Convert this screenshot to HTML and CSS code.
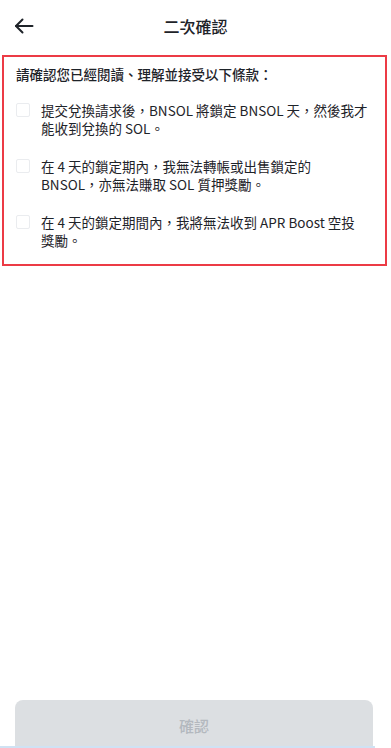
FILE: index.html
```html
<!DOCTYPE html>
<html lang="zh-Hant">
<head>
<meta charset="utf-8">
<title>二次確認</title>
<link rel="stylesheet" href="styles.css">
</head>
<body>
<div class="page">
  <header class="header">
    <span class="back">
      <svg width="20" height="16" viewBox="0 0 20 16" fill="none" stroke="#1e2329" stroke-width="2" stroke-linecap="round" stroke-linejoin="round">
        <path d="M18.5 8H2"/>
        <path d="M8.5 1.5L2 8l6.5 6.5"/>
      </svg>
    </span>
    <h1 class="title">二次確認</h1>
  </header>

  <section class="terms">
    <p class="terms-head">請確認您已經閱讀、理解並接受以下條款：</p>
    <ul class="term-list">
      <li class="term"><span class="check"></span><span class="term-text">提交兌換請求後，BNSOL 將鎖定 BNSOL 天，然後我才<br>能收到兌換的 SOL。</span></li>
      <li class="term"><span class="check"></span><span class="term-text">在 4 天的鎖定期內，我無法轉帳或出售鎖定的<br>BNSOL，亦無法賺取 SOL 質押獎勵。</span></li>
      <li class="term"><span class="check"></span><span class="term-text">在 4 天的鎖定期間內，我將無法收到 APR Boost 空投<br>獎勵。</span></li>
    </ul>
  </section>

  <div class="spacer"></div>

  <footer class="footer">
    <button class="confirm" type="button">確認</button>
  </footer>
  <div class="bottom-line"></div>
</div>
</body>
</html>
```

FILE: styles.css
```css
* { box-sizing: border-box; }
html, body { margin: 0; padding: 0; background: #ffffff; }
body {
  font-family: "Noto Sans CJK TC", "Noto Sans", sans-serif;
  color: #1e2329;
}
.page {
  height: 748px;
  display: flex;
  flex-direction: column;
  overflow: hidden;
}
.header {
  height: 52px;
  flex: none;
  display: flex;
  align-items: center;
  justify-content: center;
  position: relative;
}
.back {
  position: absolute;
  left: 14px;
  top: 18px;
  width: 20px;
  height: 16px;
  display: flex;
}
.title {
  margin: 0;
  font-size: 16px;
  font-weight: 500;
  line-height: 20px;
  color: #1e2329;
}
.terms {
  flex: none;
  margin: 3px 4px 0 2px;
  border: 2px solid #ec3b45;
  padding: 8px 8px 15px 12px;
}
.terms-head {
  margin: 0;
  font-size: 13.5px;
  line-height: 18px;
  font-weight: 500;
  color: #1e2329;
}
.term-list {
  list-style: none;
  margin: 18px 0 0;
  padding: 0;
  display: flex;
  flex-direction: column;
  gap: 20px;
}
.term {
  display: flex;
  align-items: flex-start;
  gap: 11px;
}
.check {
  flex: none;
  width: 14px;
  height: 14px;
  margin-top: 2px;
  border: 1px solid #eaecef;
  border-radius: 2px;
}
.term-text {
  font-size: 13.5px;
  line-height: 18px;
  color: #1e2329;
  white-space: nowrap;
}
.spacer { flex: 1; }
.footer {
  flex: none;
  padding: 0 18px 0 15px;
}
.confirm {
  display: block;
  width: 100%;
  height: 46px;
  border: 0;
  border-radius: 8px 8px 0 0;
  background: #dcdfe2;
  color: #b3b8be;
  font-family: "Noto Sans CJK TC", "Noto Sans", sans-serif;
  font-size: 15px;
  font-weight: 500;
  padding: 4px 0 0;
}
.bottom-line {
  flex: none;
  height: 2px;
  width: 375px;
  background: #cfe2f3;
}
```
